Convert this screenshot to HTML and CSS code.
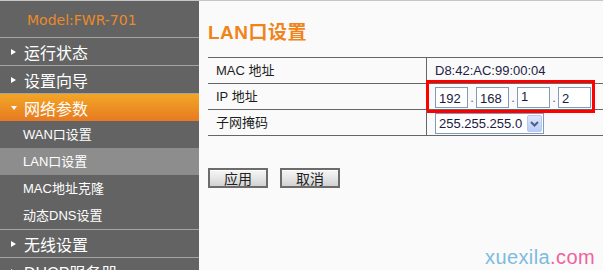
FILE: index.html
```html
<!DOCTYPE html>
<html lang="zh-CN">
<head>
<meta charset="utf-8">
<title>LAN口设置</title>
<link rel="stylesheet" href="styles.css">
</head>
<body>
<div class="page">
  <aside class="sidebar">
    <div class="brand">Model:FWR-701</div>
    <div class="nav-item"><span class="arrow"></span>运行状态</div>
    <div class="nav-item"><span class="arrow"></span>设置向导</div>
    <div class="nav-group">
      <div class="nav-item open"><span class="arrow down"></span>网络参数</div>
      <div class="sub-item">WAN口设置</div>
      <div class="sub-item current">LAN口设置</div>
      <div class="sub-item">MAC地址克隆</div>
      <div class="sub-item">动态DNS设置</div>
    </div>
    <div class="nav-item"><span class="arrow"></span>无线设置</div>
    <div class="nav-item"><span class="arrow"></span>DHCP服务器</div>
  </aside>
  <main class="main">
    <h1 class="title">LAN口设置</h1>
    <div class="settings">
      <div class="row">
        <div class="label">MAC 地址</div>
        <div class="value">D8:42:AC:99:00:04</div>
      </div>
      <div class="row">
        <div class="label">IP 地址</div>
        <div class="value ip">
          <input class="octet" type="text" value="192">
          <span class="dot">.</span>
          <input class="octet" type="text" value="168">
          <span class="dot">.</span>
          <input class="octet raised" type="text" value="1">
          <span class="dot">.</span>
          <input class="octet" type="text" value="2">
          <div class="highlight"></div>
        </div>
      </div>
      <div class="row">
        <div class="label">子网掩码</div>
        <div class="value">
          <div class="select">
            <span class="select-text">255.255.255.0</span>
            <span class="select-btn">
              <svg width="9" height="6" viewBox="0 0 9 6"><path d="M1 1 L4.5 4.5 L8 1" fill="none" stroke="#4d6185" stroke-width="2"/></svg>
            </span>
          </div>
        </div>
      </div>
    </div>
    <div class="actions">
      <button class="btn" type="button">应用</button>
      <button class="btn" type="button">取消</button>
    </div>
  </main>
  <div class="watermark">xuexila<span class="tld">.com</span></div>
</div>
</body>
</html>
```

FILE: styles.css
```css
* { box-sizing: border-box; }
html, body {
  margin: 0;
  padding: 0;
  width: 603px;
  height: 270px;
  overflow: hidden;
  background: #fafafa;
}
body {
  font-family: "Liberation Sans", "Noto Sans CJK SC", sans-serif;
}
.page {
  position: relative;
  display: flex;
  width: 603px;
  height: 270px;
  border-top: 1px solid #c6c6c6;
}
.sidebar {
  width: 199px;
  flex: none;
  background: #636363;
  color: #fff;
}
.brand {
  height: 37px;
  border-bottom: 1px solid #a4a4a4;
  padding: 5px 0 0 27px;
  font-family: "DejaVu Sans", sans-serif;
  font-size: 14px;
  line-height: 28px;
  color: #ec8a26;
}
.nav-item {
  display: flex;
  align-items: center;
  height: 28px;
  border-bottom: 1px solid #a4a4a4;
  padding-left: 11px;
  font-size: 16px;
}
.arrow {
  width: 0;
  height: 0;
  margin-right: 8px;
  border-left: 5px solid #fff;
  border-top: 3.5px solid transparent;
  border-bottom: 3.5px solid transparent;
}
.arrow.down {
  border-left: 3px solid transparent;
  border-right: 3px solid transparent;
  border-top: 4px solid #fff;
  border-bottom: 0;
  margin-right: 7px;
}
.nav-group {
  border-bottom: 1px solid #a4a4a4;
}
.nav-item.open {
  height: 27px;
  border-bottom: 0;
  background: linear-gradient(#f3a626, #e77a22);
}
.sub-item {
  height: 27px;
  padding-left: 23px;
  font-size: 13px;
  line-height: 27px;
}
.sub-item.current {
  background: #8d8d8d;
}
.main {
  flex: 1;
  padding-left: 9px;
  color: #1e1e1e;
}
.title {
  margin: 0;
  padding-top: 21px;
  font-size: 19px;
  line-height: 22px;
  font-weight: bold;
  color: #f08418;
  letter-spacing: 0.5px;
}
.settings {
  margin-top: 13px;
  border-top: 1px solid #666;
}
.row {
  display: flex;
  height: 26px;
  border-bottom: 1px solid #666;
  font-size: 13px;
}
.label {
  width: 218px;
  flex: none;
  padding-left: 8px;
  line-height: 25px;
}
.value {
  position: relative;
  flex: 1;
  border-left: 1px solid #666;
  padding-left: 8px;
  line-height: 25px;
  color: #222244;
}
.value.ip {
  display: flex;
  align-items: flex-start;
}
.octet {
  width: 33px;
  height: 21px;
  margin: 3px 0 0;
  border: 1px solid #7f9db9;
  padding: 2px 0 0 3px;
  background: #fff;
  font-family: "Liberation Sans", sans-serif;
  font-size: 13px;
  color: #1a1a40;
  outline: none;
}
.octet.raised {
  padding: 0 0 3px 3px;
}
.dot {
  width: 8px;
  text-align: center;
  line-height: 28px;
  color: #666;
}
.highlight {
  position: absolute;
  left: -1px;
  top: -4px;
  width: 169px;
  height: 33px;
  border: 3px solid #ff0000;
}
.select {
  position: relative;
  width: 109px;
  height: 21px;
  margin-top: 3px;
  border: 1px solid #7f9db9;
  background: #fff;
  padding-left: 3px;
  line-height: 19px;
  color: #1a1a40;
}
.select-btn {
  position: absolute;
  right: 1px;
  top: 1px;
  width: 15px;
  height: 17px;
  border: 1px solid #b7c8f2;
  border-radius: 2px;
  background: linear-gradient(#dde6fd, #b9cdf8);
  display: flex;
  align-items: center;
  justify-content: center;
}
.actions {
  display: flex;
  gap: 12px;
  margin-top: 32px;
}
.btn {
  width: 60px;
  height: 20px;
  padding: 0;
  border: 2px solid #6c6c6c;
  background: linear-gradient(#f6f6f6, #e8e8e8 45%, #d2d2d2);
  box-shadow: inset 0 1px 0 #fff;
  font-family: "Noto Sans CJK SC", sans-serif;
  font-size: 14px;
  line-height: 16px;
  color: #222;
}
.watermark {
  position: absolute;
  right: 8px;
  bottom: 1px;
  font-family: "Liberation Sans", sans-serif;
  font-size: 20px;
  letter-spacing: 0.4px;
  color: #7cbcdd;
}
.tld {
  color: #f2609c;
}
```
